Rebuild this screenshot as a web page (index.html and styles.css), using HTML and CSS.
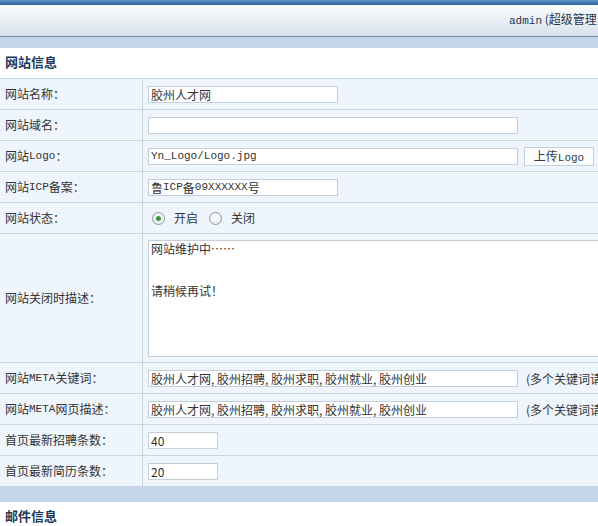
FILE: index.html
```html
<!DOCTYPE html>
<html lang="zh-CN">
<head>
<meta charset="utf-8">
<title>网站信息</title>
<link rel="stylesheet" href="styles.css">
</head>
<body>
<div class="page">
  <div class="topbar"></div>
  <div class="header">
    <span class="user"><span class="mono">admin</span> (超级管理员)</span>
  </div>
  <div class="band"></div>
  <h2 class="section-title">网站信息</h2>
  <div class="form">
    <div class="row">
      <div class="label">网站名称：</div>
      <div class="value"><input class="text short serifish" value="胶州人才网"></div>
    </div>
    <div class="row">
      <div class="label">网站域名：</div>
      <div class="value"><input class="text long" value=""></div>
    </div>
    <div class="row">
      <div class="label">网站<span class="mono">Logo</span>：</div>
      <div class="value">
        <input class="text long mono-input" value="Yn_Logo/Logo.jpg">
        <button class="btn">上传<span class="mono">Logo</span></button>
      </div>
    </div>
    <div class="row">
      <div class="label">网站<span class="mono">ICP</span>备案：</div>
      <div class="value"><span class="text short fake">鲁<span class="mono">ICP</span>备<span class="mono">09XXXXXX</span>号</span></div>
    </div>
    <div class="row">
      <div class="label">网站状态：</div>
      <div class="value radios">
        <label class="radio"><span class="dot on"></span>开启</label>
        <label class="radio"><span class="dot"></span>关闭</label>
      </div>
    </div>
    <div class="row row-tall">
      <div class="label">网站关闭时描述：</div>
      <div class="value"><textarea class="area">网站维护中……


请稍候再试！</textarea></div>
    </div>
    <div class="row">
      <div class="label">网站<span class="mono">META</span>关键词：</div>
      <div class="value">
        <input class="text long" value="胶州人才网, 胶州招聘, 胶州求职, 胶州就业, 胶州创业">
        <span class="note">(多个关键词请用逗号隔开)</span>
      </div>
    </div>
    <div class="row">
      <div class="label">网站<span class="mono">META</span>网页描述：</div>
      <div class="value">
        <input class="text long" value="胶州人才网, 胶州招聘, 胶州求职, 胶州就业, 胶州创业">
        <span class="note">(多个关键词请用逗号隔开)</span>
      </div>
    </div>
    <div class="row">
      <div class="label">首页最新招聘条数：</div>
      <div class="value"><input class="text num" value="40"></div>
    </div>
    <div class="row">
      <div class="label">首页最新简历条数：</div>
      <div class="value"><input class="text num" value="20"></div>
    </div>
  </div>
  <div class="band band-bottom"></div>
  <h2 class="section-title">邮件信息</h2>
</div>
</body>
</html>
```

FILE: styles.css
```css
html, body {
  margin: 0;
  padding: 0;
  overflow: hidden;
  background: #ffffff;
}

body {
  font-family: "Noto Sans CJK SC", "Liberation Sans", sans-serif;
  font-size: 12px;
  color: #333333;
}

.page {
  width: 720px;
}

.mono {
  font-family: "Liberation Mono", "Noto Sans CJK SC", monospace;
  font-size: 11px;
}

.topbar {
  height: 5px;
  background: linear-gradient(#5d92c8, #2b63a0);
}

.header {
  height: 31px;
  border-bottom: 1px solid #6f8ca5;
  background: linear-gradient(#fbfdfe, #d7e1eb);
  display: flex;
  align-items: center;
  padding-left: 509px;
  box-sizing: content-box;
}

.user {
  white-space: nowrap;
  color: #1f3550;
  font-size: 12px;
  line-height: 14px;
  padding-bottom: 2px;
}

.band {
  height: 11px;
  background: #c5d6eb;
}

.band-bottom {
  height: 15px;
}

.section-title {
  margin: 0;
  height: 30px;
  line-height: 28px;
  padding-left: 5px;
  font-size: 13px;
  font-weight: bold;
  color: #1e3a5c;
  background: #ffffff;
}

.form {
  border-top: 1px solid #c8d5e1;
  background: #eef5fc;
}

.row {
  display: grid;
  grid-template-columns: 143px 1fr;
  height: 31px;
  box-sizing: border-box;
  border-bottom: 1px solid #c8d5e1;
}

.row-tall {
  height: 129px;
}

.label {
  border-right: 1px solid #c8d5e1;
  padding-left: 5px;
  display: flex;
  align-items: center;
  white-space: nowrap;
  color: #333333;
  line-height: 14px;
}

.value {
  display: flex;
  align-items: center;
  padding-left: 5px;
  white-space: nowrap;
}

.text {
  box-sizing: border-box;
  height: 17px;
  border: 1px solid #c3d0dc;
  background: #ffffff;
  padding: 0 2px;
  margin: 0;
  font-family: "Noto Sans CJK SC", "Liberation Sans", sans-serif;
  font-size: 12px;
  color: #333333;
  outline: none;
  line-height: 15px;
}

.fake {
  display: inline-flex;
  align-items: center;
}

.mono-input {
  font-family: "Liberation Mono", monospace;
  font-size: 11px;
}

.short {
  width: 190px;
}

.long {
  width: 370px;
}

.num {
  width: 70px;
}

.btn {
  margin: 0 0 0 6px;
  width: 70px;
  height: 19px;
  box-sizing: border-box;
  border: 1px solid #c3d0dc;
  background: #fbfdff;
  color: #2f3f50;
  font-family: "Noto Sans CJK SC", sans-serif;
  font-size: 12px;
  padding: 0;
  line-height: 15px;
}

.radios {
  padding-left: 9px;
  gap: 11px;
}

.radio {
  display: flex;
  align-items: center;
  gap: 9px;
  color: #333333;
  line-height: 14px;
}

.dot {
  width: 11px;
  height: 11px;
  border-radius: 50%;
  border: 1px solid #8b98a4;
  background: radial-gradient(circle at 50% 40%, #ffffff, #e3e8ec);
  display: flex;
  align-items: center;
  justify-content: center;
}

.dot.on::after {
  content: "";
  width: 5px;
  height: 5px;
  border-radius: 50%;
  background: #3f9a3a;
}

.area {
  box-sizing: border-box;
  width: 480px;
  height: 117px;
  margin: 0;
  border: 1px solid #c3d0dc;
  background: #ffffff;
  padding: 1px 2px;
  font-family: "Noto Sans CJK SC", sans-serif;
  font-size: 12px;
  line-height: 14px;
  color: #333333;
  resize: none;
  outline: none;
  overflow: hidden;
}

.note {
  margin-left: 8px;
  color: #333333;
  white-space: nowrap;
}
```
